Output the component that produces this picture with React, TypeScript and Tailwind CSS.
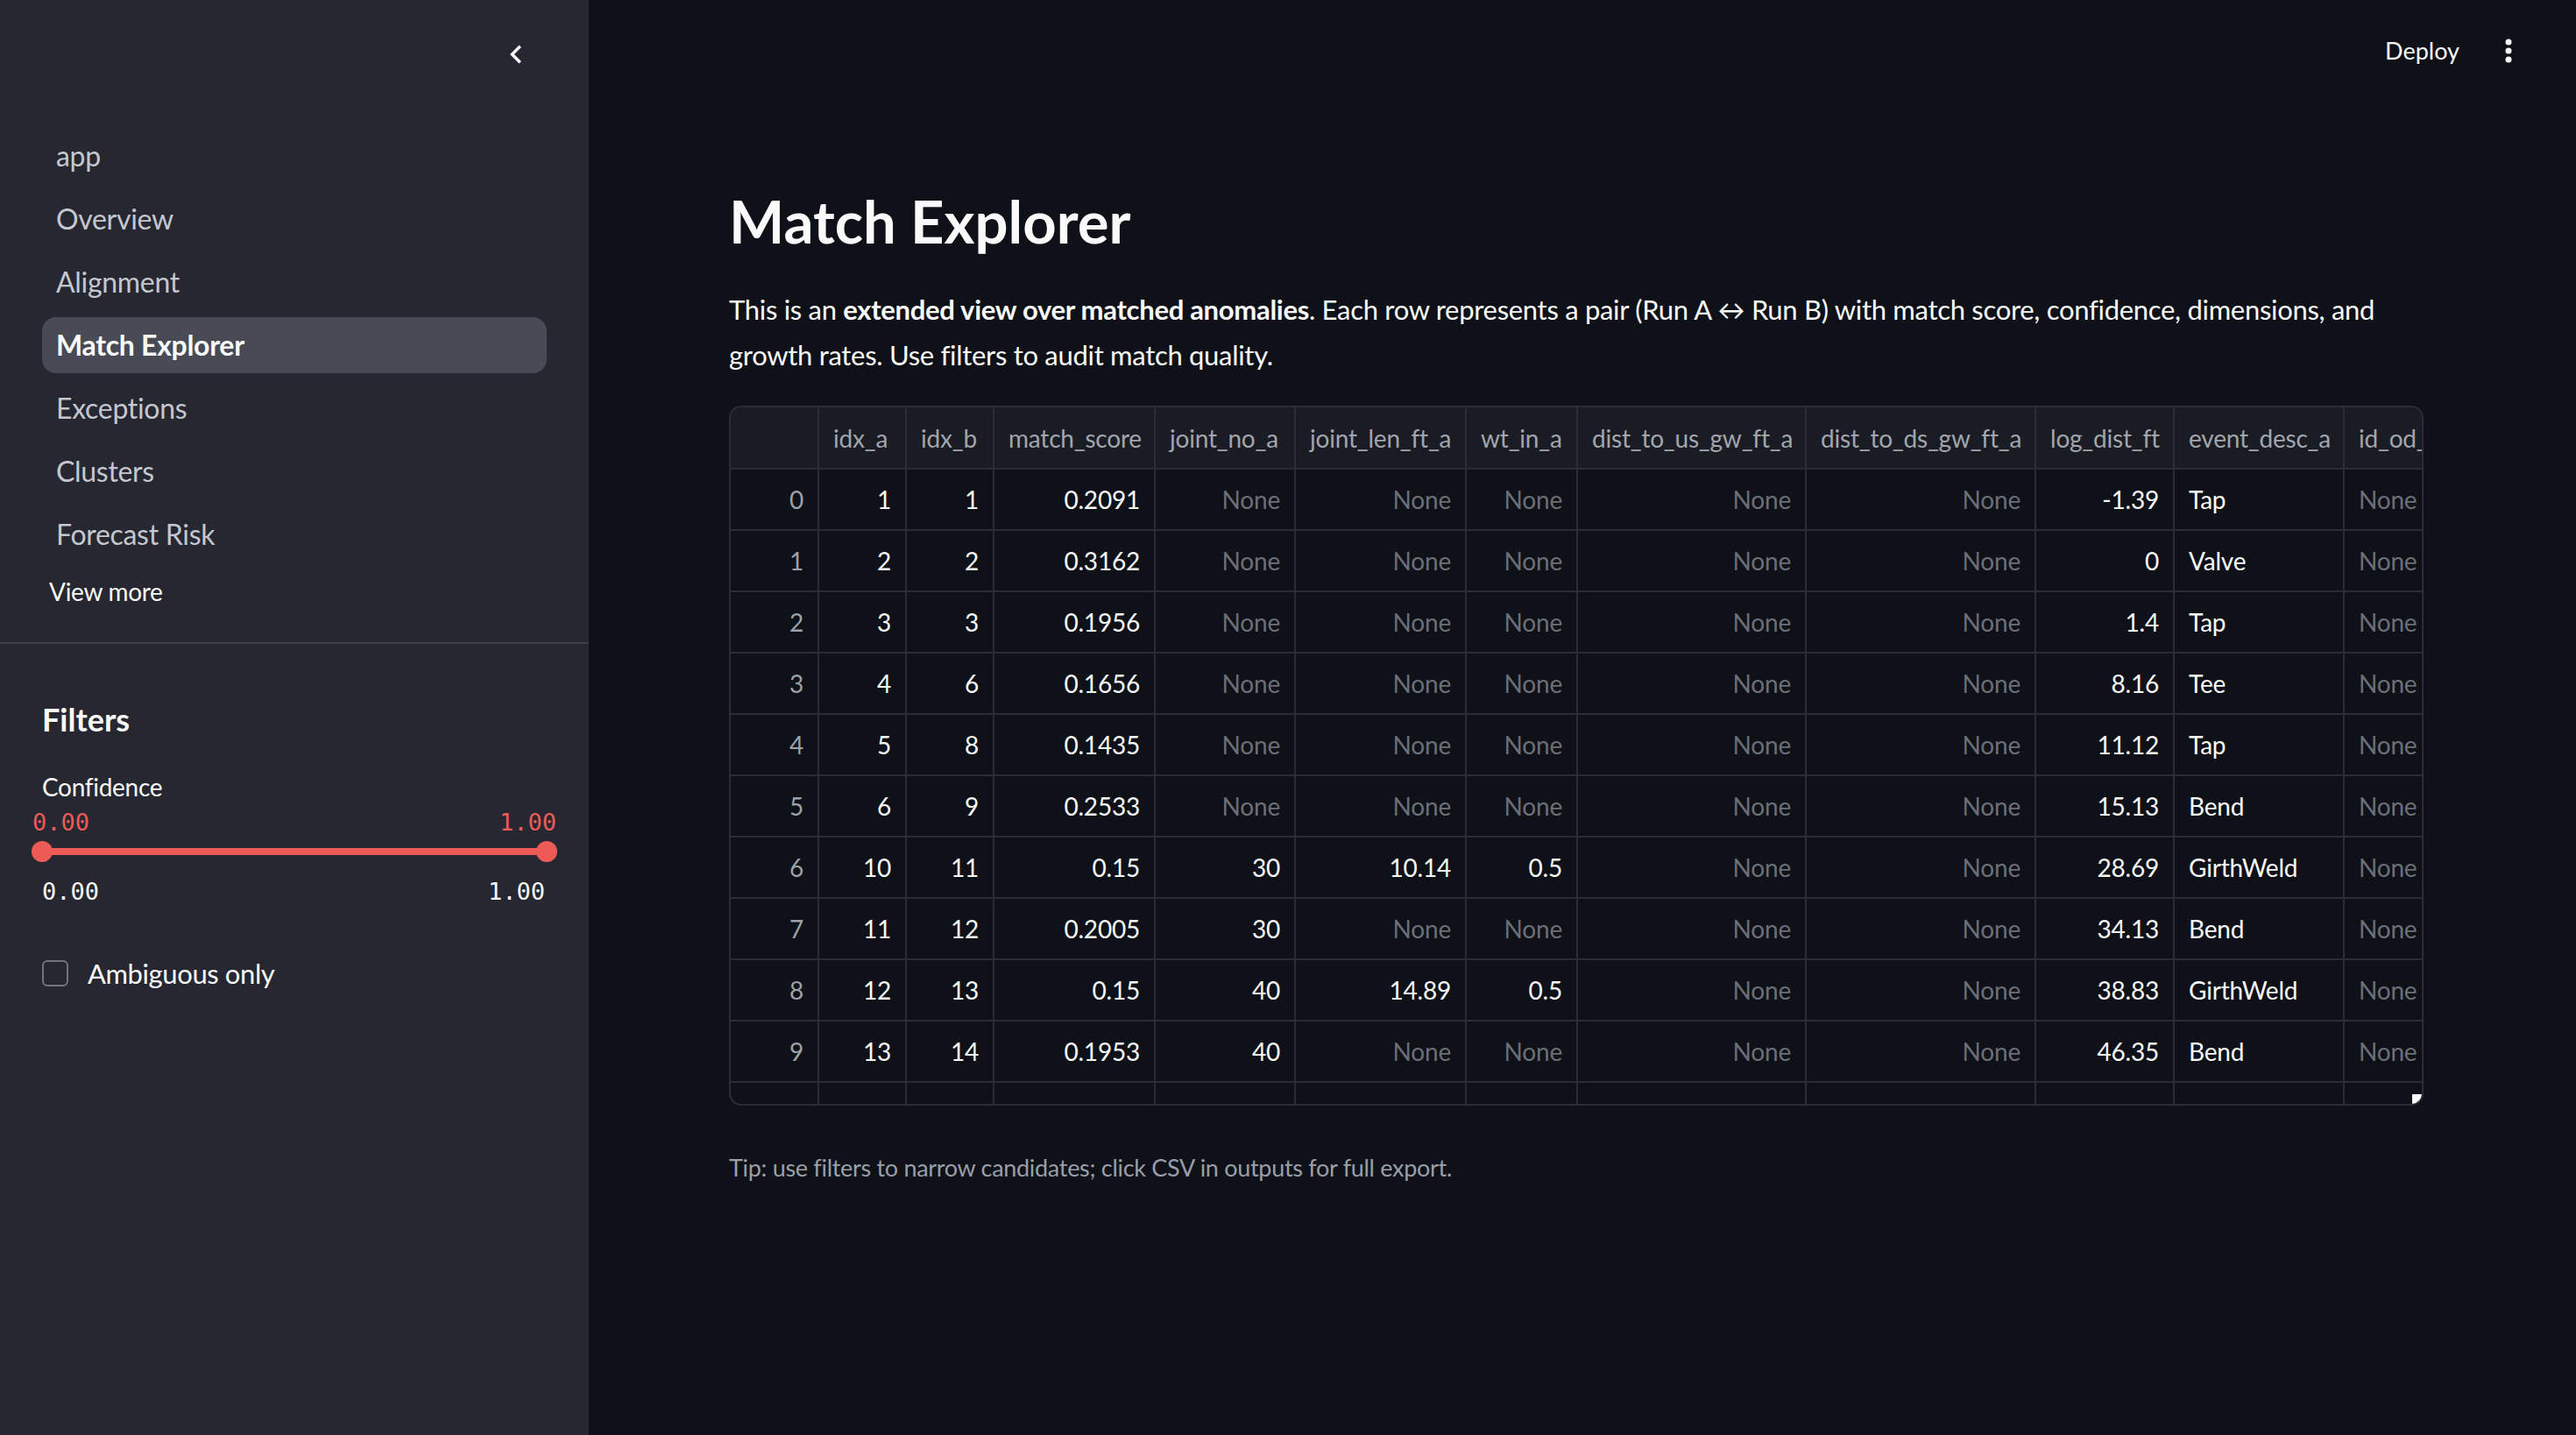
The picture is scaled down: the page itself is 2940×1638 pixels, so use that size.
import React from 'react';

const pages = ['app', 'Overview', 'Alignment', 'Match Explorer', 'Exceptions', 'Clusters', 'Forecast Risk'];

type Col = { label: string; width: string; align: 'left' | 'right' };

const columns: Col[] = [
  { label: '', width: 'w-[101px]', align: 'right' },
  { label: 'idx_a', width: 'w-[100px]', align: 'right' },
  { label: 'idx_b', width: 'w-[100px]', align: 'right' },
  { label: 'match_score', width: 'w-[184px]', align: 'right' },
  { label: 'joint_no_a', width: 'w-[160px]', align: 'right' },
  { label: 'joint_len_ft_a', width: 'w-[195px]', align: 'right' },
  { label: 'wt_in_a', width: 'w-[127px]', align: 'right' },
  { label: 'dist_to_us_gw_ft_a', width: 'w-[261px]', align: 'right' },
  { label: 'dist_to_ds_gw_ft_a', width: 'w-[262px]', align: 'right' },
  { label: 'log_dist_ft', width: 'w-[158px]', align: 'right' },
  { label: 'event_desc_a', width: 'w-[194px]', align: 'left' },
  { label: 'id_od_in_a', width: 'w-[200px]', align: 'left' },
];

const rows: string[][] = [
  ['0', '1', '1', '0.2091', 'None', 'None', 'None', 'None', 'None', '-1.39', 'Tap', 'None'],
  ['1', '2', '2', '0.3162', 'None', 'None', 'None', 'None', 'None', '0', 'Valve', 'None'],
  ['2', '3', '3', '0.1956', 'None', 'None', 'None', 'None', 'None', '1.4', 'Tap', 'None'],
  ['3', '4', '6', '0.1656', 'None', 'None', 'None', 'None', 'None', '8.16', 'Tee', 'None'],
  ['4', '5', '8', '0.1435', 'None', 'None', 'None', 'None', 'None', '11.12', 'Tap', 'None'],
  ['5', '6', '9', '0.2533', 'None', 'None', 'None', 'None', 'None', '15.13', 'Bend', 'None'],
  ['6', '10', '11', '0.15', '30', '10.14', '0.5', 'None', 'None', '28.69', 'GirthWeld', 'None'],
  ['7', '11', '12', '0.2005', '30', 'None', 'None', 'None', 'None', '34.13', 'Bend', 'None'],
  ['8', '12', '13', '0.15', '40', '14.89', '0.5', 'None', 'None', '38.83', 'GirthWeld', 'None'],
  ['9', '13', '14', '0.1953', '40', 'None', 'None', 'None', 'None', '46.35', 'Bend', 'None'],
  ['', '', '', '', '', '', '', 'None', 'None', '', 'GirthWeld', 'None'],
];

const ChevronLeft = () => (
  <svg width="42" height="42" viewBox="0 0 24 24" fill="#fafafa">
    <path d="M15.41 7.41L14 6l-6 6 6 6 1.41-1.41L10.83 12z" />
  </svg>
);

const Kebab = () => (
  <svg width="28" height="28" viewBox="0 0 28 28" fill="#fafafa">
    <circle cx="14" cy="4" r="3.5" />
    <circle cx="14" cy="14" r="3.5" />
    <circle cx="14" cy="24" r="3.5" />
  </svg>
);

const Sidebar = () => (
  <aside className="flex w-[672px] shrink-0 flex-col bg-[#262730]">
    <div className="flex justify-end pr-[62px] pt-[41px]">
      <ChevronLeft />
    </div>

    <nav className="mt-[63px] flex flex-col gap-[8px] px-[48px]">
      {pages.map(p => {
        const active = p === 'Match Explorer';
        return (
          <div
            key={p}
            className={`flex h-[64px] items-center rounded-[16px] px-[16px] text-[32px] tracking-[-0.3px] ${
              active ? 'bg-[#484a55] font-bold text-[#fafafa]' : 'text-[#c4c7cf]'
            }`}
          >
            {p}
          </div>
        );
      })}
    </nav>
    <div className="ml-[56px] mt-[13px] text-[28px] leading-[40px] tracking-[-0.3px] text-[#fafafa]">View more</div>

    <div className="mt-[38px] h-[2px] w-full bg-[#3d3f49]" />

    {/* Filters */}
    <div className="flex flex-col px-[48px]">
      <h2 className="mt-[64px] text-[36px] font-bold leading-[44px] text-[#fafafa]">Filters</h2>
      <div className="mt-[35px] text-[28px] leading-[40px] tracking-[-0.3px] text-[#fafafa]">Confidence</div>

      <div className="-mx-[11px] mt-[3px] flex justify-between font-['DejaVu_Sans_Mono',monospace] text-[27px] leading-[36px] text-[#ed5b56]">
        <span>0.00</span>
        <span>1.00</span>
      </div>
      <div className="relative mt-[3px] flex h-[24px] items-center">
        <div className="h-[8px] w-full bg-[#ed5b56]" />
        <div className="absolute -left-[12px] top-0 h-[24px] w-[24px] rounded-full bg-[#ed5b56]" />
        <div className="absolute -right-[12px] top-0 h-[24px] w-[24px] rounded-full bg-[#ed5b56]" />
      </div>
      <div className="mt-[16px] flex justify-between pr-[2px] font-['DejaVu_Sans_Mono',monospace] text-[27px] leading-[36px] text-[#fafafa]">
        <span>0.00</span>
        <span>1.00</span>
      </div>

      <label className="mt-[55px] flex h-[40px] items-center gap-[22px]">
        <span className="h-[30px] w-[30px] rounded-[6px] border-2 border-[#72747c]" />
        <span className="text-[31px] leading-[40px] tracking-[-0.4px] text-[#fafafa]">Ambiguous only</span>
      </label>
    </div>
  </aside>
);

const cellText = (v: string, ci: number) => {
  if (v === 'None') return 'text-[#6c6f77]';
  if (ci === 0) return 'text-[#9da1a9]';
  return 'text-[#fafafa]';
};

const DataTable = () => (
  <div className="relative mt-[32px] h-[799px] w-[1934px] overflow-hidden rounded-[14px] border-2 border-[#2b2d35]">
    <div className="w-max">
      <div className="flex h-[71px] border-b-2 border-[#2b2d35] bg-[#1a1c24]">
        {columns.map((c, i) => (
          <div
            key={i}
            className={`flex shrink-0 items-center whitespace-nowrap border-r-2 border-[#2b2d35] px-[16px] text-[#a2a5ad] ${c.width}`}
          >
            {c.label}
          </div>
        ))}
      </div>
      {rows.map((r, ri) => (
        <div key={ri} className="flex h-[70px] border-b-2 border-[#2b2d35]">
          {r.map((v, ci) => (
            <div
              key={ci}
              className={`flex shrink-0 items-center whitespace-nowrap border-r-2 border-[#2b2d35] px-[16px] ${columns[ci].width} ${
                columns[ci].align === 'right' ? 'justify-end' : 'justify-start'
              } ${cellText(v, ci)}`}
            >
              {v}
            </div>
          ))}
        </div>
      ))}
    </div>
    <div className="absolute bottom-0 right-0 h-[11px] w-[11px] bg-white" />
  </div>
);

export default function App() {
  return (
    <div className="flex h-[1638px] w-[2940px] overflow-hidden bg-[#0e1117] font-['Lato','Noto_Sans',sans-serif] text-[#fafafa]">
      <Sidebar />

      <main className="flex flex-1 flex-col">
        <header className="flex h-[116px] items-center justify-end gap-[42px] pr-[63px]">
          <span className="text-[27px]">Deploy</span>
          <Kebab />
        </header>

        <div className="flex flex-col pl-[160px] pt-[95px]">
          <h1 className="text-[67px] font-bold leading-[82px]">Match Explorer</h1>
          <p className="mt-[34px] w-[1934px] text-[31px] leading-[52px] tracking-[-0.3px]">
            This is an <span className="font-bold">extended view over matched anomalies</span>. Each row represents a
            pair (Run A ↔ Run B) with match score, confidence, dimensions, and growth rates. Use filters to audit match
            quality.
          </p>

          <div className="text-[28px] tracking-[-0.2px]">
            <DataTable />
          </div>

          <p className="mt-[51px] text-[27px] leading-[40px] tracking-[-0.3px] text-[#9a9ea8]">
            Tip: use filters to narrow candidates; click CSV in outputs for full export.
          </p>
        </div>
      </main>
    </div>
  );
}
